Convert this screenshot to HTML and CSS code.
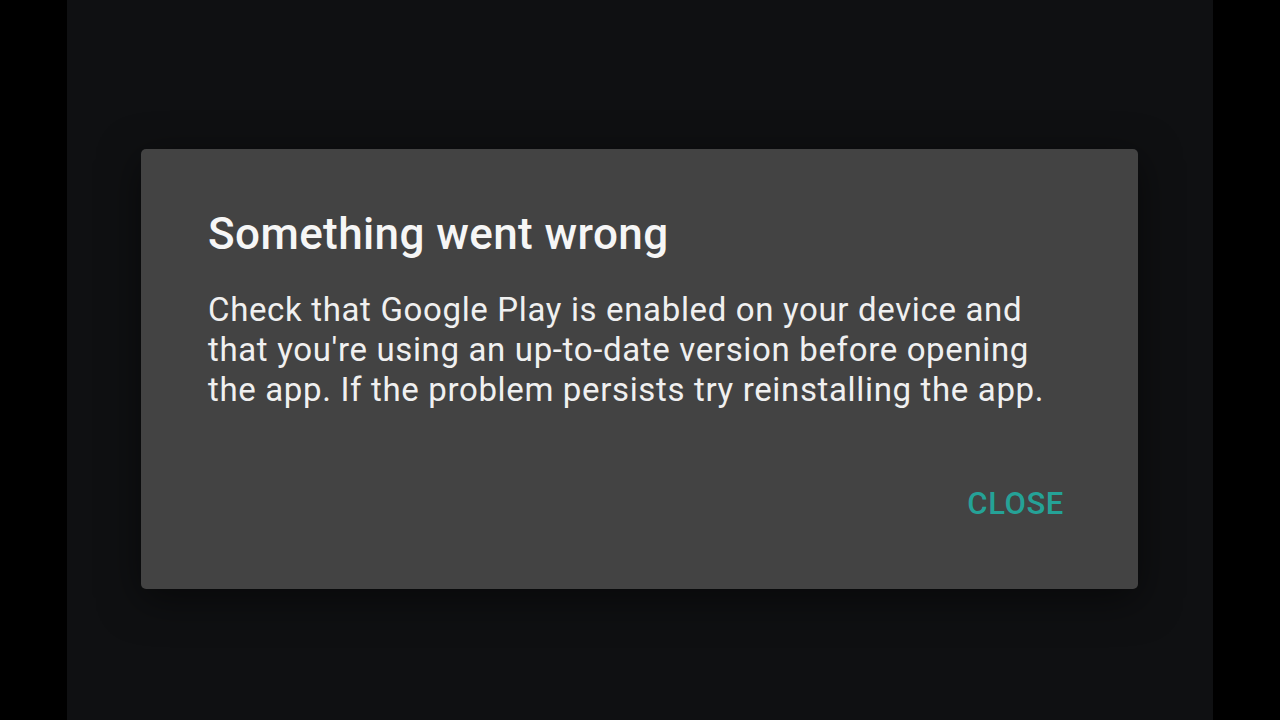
FILE: index.html
```html
<!DOCTYPE html>
<html lang="en">
<head>
<meta charset="utf-8">
<title>Something went wrong</title>
<link rel="stylesheet" href="styles.css">
</head>
<body>
<div class="screen">
  <div class="dialog">
    <h1 class="title">Something went wrong</h1>
    <p class="message">Check that Google Play is enabled on your device and that you're using an up-to-date version before opening the app. If the problem persists try reinstalling the app.</p>
    <div class="actions">
      <button class="btn">CLOSE</button>
    </div>
  </div>
</div>
</body>
</html>
```

FILE: styles.css
```css
html, body {
  margin: 0;
  padding: 0;
  background: #000;
  height: 720px;
  overflow: hidden;
}
.screen {
  width: 1146px;
  height: 720px;
  margin-left: 67px;
  background: #0f1012;
  padding-top: 149px;
  box-sizing: border-box;
  font-family: Roboto, "Liberation Sans", sans-serif;
}
.dialog {
  margin-left: 74px;
  width: 997px;
  height: 440px;
  background: #434343;
  border-radius: 5px;
  box-shadow: 0 10px 40px rgba(0, 0, 0, 0.5);
  box-sizing: border-box;
  padding: 61px 67px 0 67px;
  display: flex;
  flex-direction: column;
}
.title {
  margin: 0;
  font-size: 44px;
  font-weight: 500;
  letter-spacing: 0.4px;
  line-height: 48px;
  color: #f6f6f6;
}
.message {
  margin: 32px 0 0 0;
  font-size: 33px;
  font-weight: 400;
  letter-spacing: 0.65px;
  line-height: 40px;
  color: #f0f0f0;
  width: 840px;
}
.actions {
  display: flex;
  justify-content: flex-end;
  margin-top: 76px;
}
.btn {
  background: none;
  border: none;
  padding: 0;
  margin-right: 7px;
  font-family: Roboto, "Liberation Sans", sans-serif;
  font-size: 31px;
  font-weight: 500;
  letter-spacing: 0.6px;
  color: #25a297;
  line-height: 36px;
}
```
